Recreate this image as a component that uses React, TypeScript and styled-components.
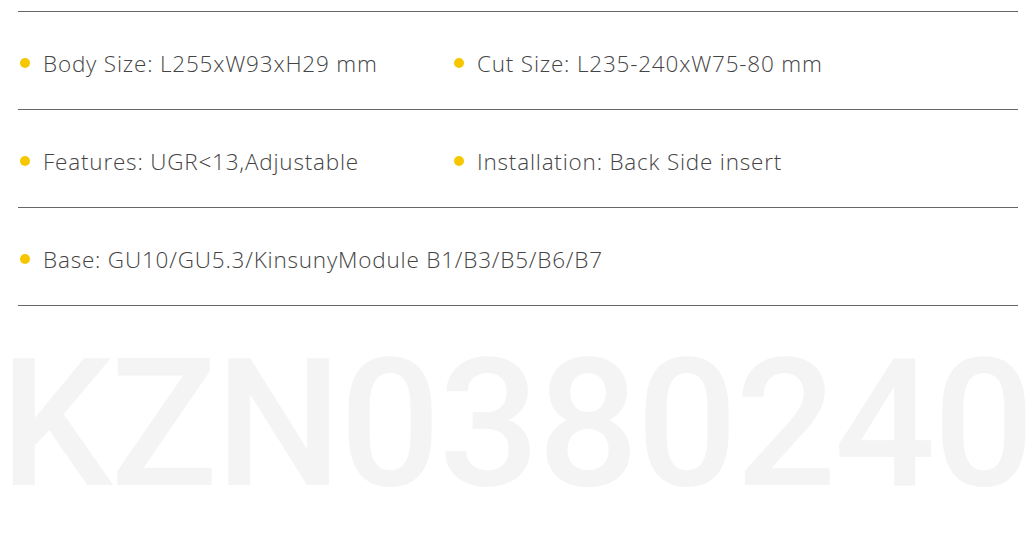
import React from 'react';
import styled, { createGlobalStyle } from 'styled-components';

const GlobalStyle = createGlobalStyle`
  html, body {
    margin: 0;
    padding: 0;
    background: #ffffff;
  }
  body {
    font-family: 'Open Sans', 'Liberation Sans', sans-serif;
  }
`;

const Page = styled.div`
  width: 1034px;
  height: 534px;
  overflow: hidden;
  background: #ffffff;
  padding-top: 11px;
  box-sizing: border-box;
`;

const Specs = styled.div`
  width: 1000px;
  margin-left: 18px;
  border-top: 1px solid #666666;
`;

const Row = styled.div`
  display: flex;
  align-items: center;
  height: 98px;
  padding-top: 5px;
  box-sizing: border-box;
  border-bottom: 1px solid #666666;
  padding-left: 2px;
`;

const Item = styled.div<{ $wide?: boolean }>`
  display: flex;
  align-items: center;
  gap: 13px;
  width: ${p => (p.$wide ? 'auto' : '434px')};
  flex-shrink: 0;
`;

const Dot = styled.span`
  width: 10px;
  height: 10px;
  border-radius: 50%;
  background: #f6c700;
  flex-shrink: 0;
`;

const Label = styled.span`
  font-family: 'Open Sans', 'Liberation Sans', sans-serif;
  font-weight: 300;
  font-size: 22.5px;
  color: #444444;
  letter-spacing: 0.8px;
  white-space: nowrap;
`;

const Model = styled.div`
  font-family: Roboto, 'Liberation Sans', sans-serif;
  font-weight: 500;
  font-size: 178px;
  line-height: 178px;
  letter-spacing: -2.2px;
  color: #f4f4f4;
  margin-top: 29px;
  margin-left: 0;
  white-space: nowrap;
`;

const rows: string[][] = [
  ['Body Size: L255xW93xH29 mm', 'Cut Size: L235-240xW75-80 mm'],
  ['Features: UGR<13,Adjustable', 'Installation: Back Side insert'],
  ['Base: GU10/GU5.3/KinsunyModule B1/B3/B5/B6/B7'],
];

export default function App() {
  return (
    <Page>
      <GlobalStyle />
      <Specs>
        {rows.map((row, i) => (
          <Row key={i}>
            {row.map(text => (
              <Item key={text} $wide={row.length === 1}>
                <Dot />
                <Label>{text}</Label>
              </Item>
            ))}
          </Row>
        ))}
      </Specs>
      <Model>KZN0380240</Model>
    </Page>
  );
}
